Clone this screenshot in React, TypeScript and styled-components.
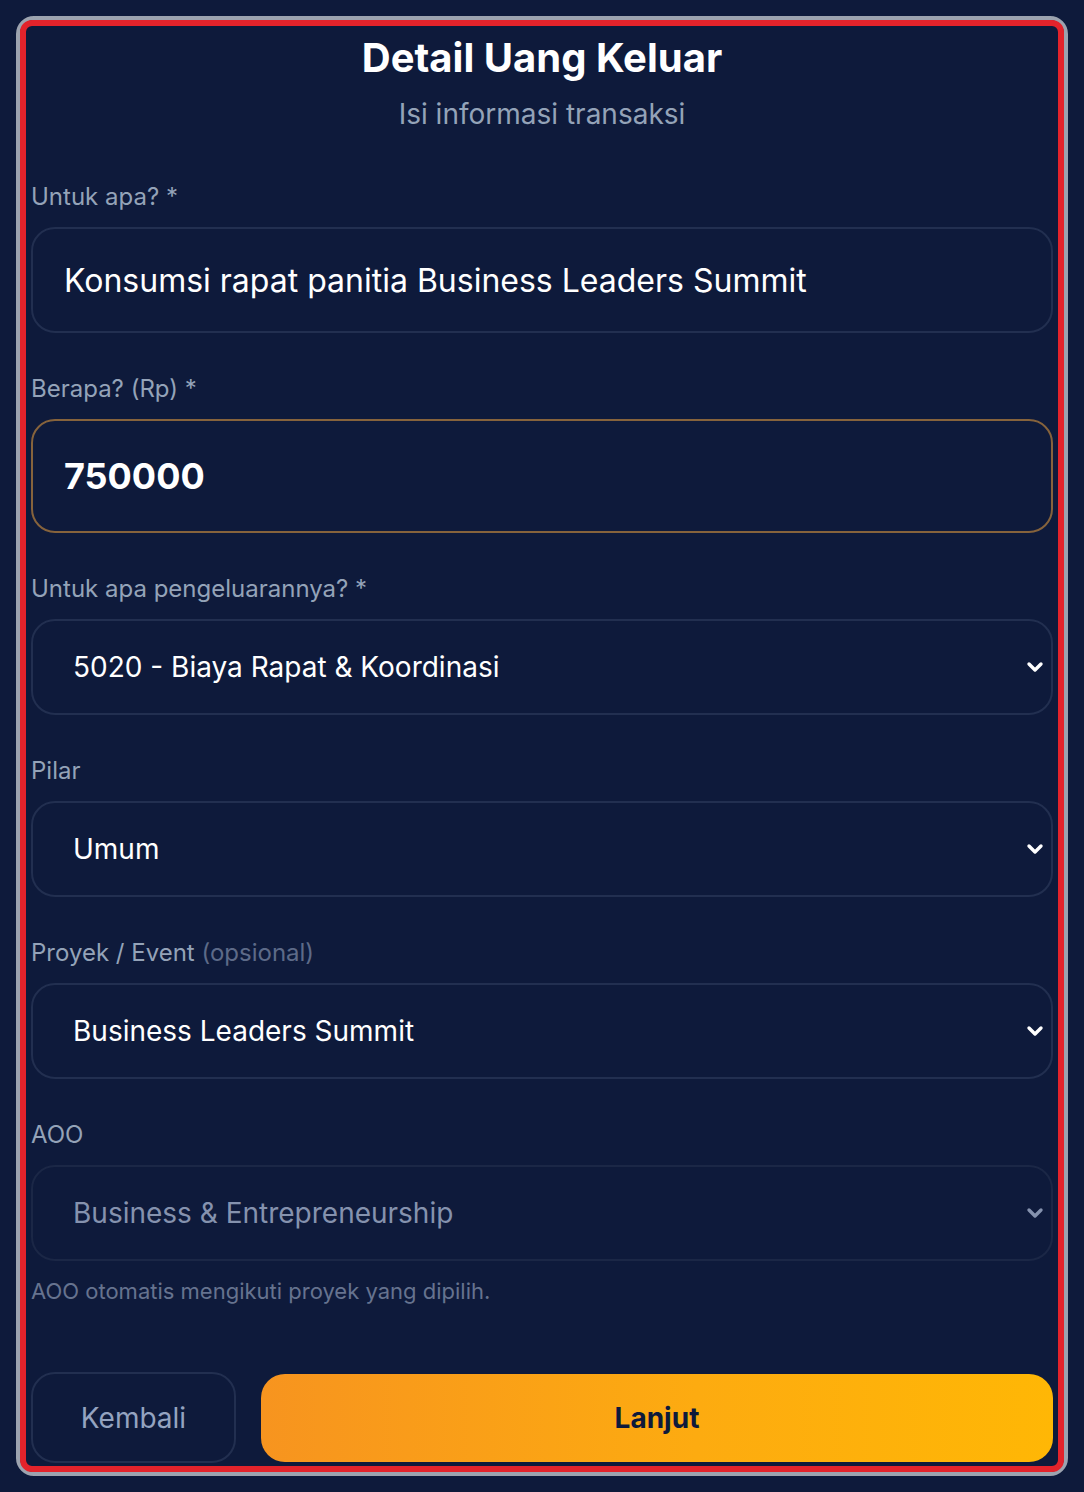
import React from "react";
import styled, { createGlobalStyle } from "styled-components";

const GlobalStyle = createGlobalStyle`
  html, body {
    margin: 0;
    padding: 0;
    background: #0e1a3b;
  }
  body {
    font-family: Inter, "Noto Sans", "Liberation Sans", sans-serif;
    color: #ffffff;
  }
  * {
    box-sizing: border-box;
  }
`;

const Page = styled.div`
  padding: 16px;
`;

const Frame = styled.div`
  border: 4px solid #9ca3af;
  border-radius: 18px;
`;

const Card = styled.div`
  border: 6px solid #e3232b;
  border-radius: 12px;
  background: #0e1a3b;
  padding: 5px 5px 3px;
`;

const Header = styled.div`
  display: flex;
  flex-direction: column;
  align-items: center;
  gap: 14px;
  padding-top: 5px;
  margin-bottom: 45px;
`;

const Title = styled.h1`
  margin: 0;
  font-size: 40px;
  line-height: 44px;
  font-weight: 700;
  color: #ffffff;
`;

const Subtitle = styled.p`
  margin: 0;
  font-size: 28px;
  line-height: 40px;
  color: #94a3b8;
`;

const Form = styled.form`
  display: flex;
  flex-direction: column;
  gap: 38px;
`;

const Field = styled.div`
  display: flex;
  flex-direction: column;
  gap: 12px;
`;

const Label = styled.label`
  font-size: 24px;
  line-height: 36px;
  color: #94a3b8;
`;

const Optional = styled.span`
  color: #5d6a88;
`;

const TextInput = styled.input<{ $accent?: boolean; $bold?: boolean }>`
  width: 100%;
  height: ${(p) => (p.$accent ? 114 : 106)}px;
  padding: 0 31px;
  border: 2px solid ${(p) => (p.$accent ? "#86633c" : "#222f50")};
  border-radius: 24px;
  background: #0e1a3b;
  color: #ffffff;
  font-family: Inter, "Noto Sans", sans-serif;
  font-size: ${(p) => (p.$bold ? 36 : 32)}px;
  font-weight: ${(p) => (p.$bold ? 700 : 400)};
  outline: none;
`;

const SelectWrap = styled.div`
  position: relative;
`;

const Select = styled.select`
  width: 100%;
  height: 96px;
  padding: 0 40px;
  border: 2px solid #222f50;
  border-radius: 24px;
  background: #0e1a3b;
  color: #ffffff;
  font-family: Inter, "Noto Sans", sans-serif;
  font-size: 28px;
  appearance: none;
  outline: none;
  &:disabled {
    color: #8592ae;
    border-color: #1b2746;
    opacity: 1;
  }
`;

const Chevron = styled.svg<{ $muted?: boolean }>`
  position: absolute;
  right: 8px;
  top: 50%;
  transform: translateY(-50%);
  width: 20px;
  height: 13px;
  stroke: ${(p) => (p.$muted ? "#8592ae" : "#ffffff")};
`;

const Help = styled.p`
  margin: 3px 0 0;
  font-size: 22px;
  line-height: 30px;
  color: #66738f;
`;

const AooBlock = styled.div`
  display: flex;
  flex-direction: column;
  gap: 12px;
`;

const Actions = styled.div`
  display: flex;
  align-items: center;
  gap: 25px;
  margin-top: 28px;
`;

const BackBtn = styled.button`
  width: 205px;
  height: 91px;
  border: 2px solid #222f50;
  border-radius: 24px;
  background: #0e1a3b;
  color: #94a3c0;
  font-family: Inter, "Noto Sans", sans-serif;
  font-size: 28px;
`;

const NextBtn = styled.button`
  flex: 1;
  height: 88px;
  border: none;
  border-radius: 24px;
  background: linear-gradient(90deg, #f7941f 0%, #fdab10 55%, #ffb705 100%);
  color: #0e1a3b;
  font-family: Inter, "Noto Sans", sans-serif;
  font-size: 28px;
  font-weight: 700;
`;

const Arrow = ({ muted }: { muted?: boolean }) => (
  <Chevron $muted={muted} viewBox="0 0 20 13" fill="none">
    <path d="M4 3.5 L10 9.5 L16 3.5" strokeWidth="3.4" strokeLinecap="round" strokeLinejoin="round" />
  </Chevron>
);

const App: React.FC = () => {
  return (
    <Page>
      <GlobalStyle />
      <Frame>
        <Card>
          <Header>
            <Title>Detail Uang Keluar</Title>
            <Subtitle>Isi informasi transaksi</Subtitle>
          </Header>
          <Form onSubmit={(e) => e.preventDefault()}>
            <Field>
              <Label>Untuk apa? *</Label>
              <TextInput defaultValue="Konsumsi rapat panitia Business Leaders Summit" />
            </Field>
            <Field>
              <Label>Berapa? (Rp) *</Label>
              <TextInput $accent $bold defaultValue="750000" />
            </Field>
            <Field>
              <Label>Untuk apa pengeluarannya? *</Label>
              <SelectWrap>
                <Select defaultValue="5020">
                  <option value="5020">5020 - Biaya Rapat &amp; Koordinasi</option>
                </Select>
                <Arrow />
              </SelectWrap>
            </Field>
            <Field>
              <Label>Pilar</Label>
              <SelectWrap>
                <Select defaultValue="umum">
                  <option value="umum">Umum</option>
                </Select>
                <Arrow />
              </SelectWrap>
            </Field>
            <Field>
              <Label>
                Proyek / Event <Optional>(opsional)</Optional>
              </Label>
              <SelectWrap>
                <Select defaultValue="bls">
                  <option value="bls">Business Leaders Summit</option>
                </Select>
                <Arrow />
              </SelectWrap>
            </Field>
            <AooBlock>
              <Field>
                <Label>AOO</Label>
                <SelectWrap>
                  <Select disabled defaultValue="be">
                    <option value="be">Business &amp; Entrepreneurship</option>
                  </Select>
                  <Arrow muted />
                </SelectWrap>
              </Field>
              <Help>AOO otomatis mengikuti proyek yang dipilih.</Help>
            </AooBlock>
            <Actions>
              <BackBtn type="button">Kembali</BackBtn>
              <NextBtn type="submit">Lanjut</NextBtn>
            </Actions>
          </Form>
        </Card>
      </Frame>
    </Page>
  );
};

export default App;
